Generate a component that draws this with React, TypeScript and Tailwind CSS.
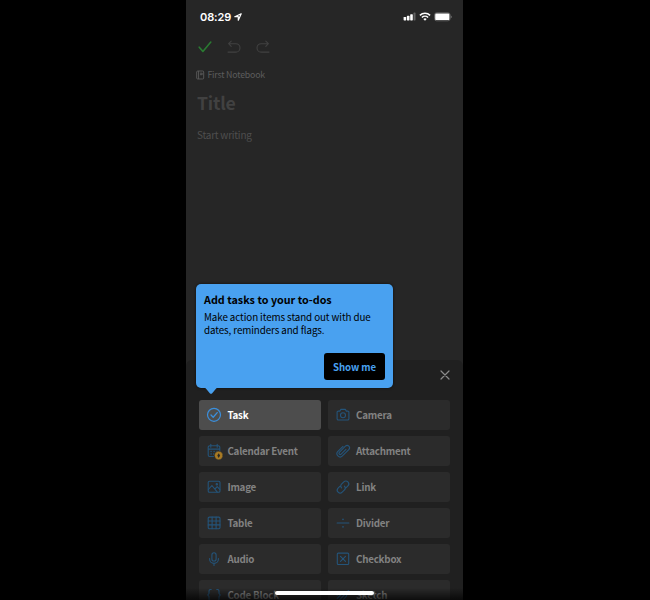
import type { ReactNode } from "react";

const FONT = "font-['Noto_Sans_CJK_SC','Noto_Sans',sans-serif]";

function Icon({ children, className = "" }: { children: ReactNode; className?: string }) {
  return (
    <svg
      viewBox="0 0 16 16"
      className={`h-4 w-4 shrink-0 overflow-visible ${className}`}
      fill="none"
      stroke="currentColor"
      strokeWidth="1.1"
      strokeLinecap="round"
      strokeLinejoin="round"
    >
      {children}
    </svg>
  );
}

const icons: Record<string, ReactNode> = {
  Task: (
    <>
      <circle cx="8" cy="7.8" r="6.5" strokeWidth="1.2" />
      <path d="M5 8 7.2 10.2 11.2 5.6" strokeWidth="1.3" />
    </>
  ),
  Camera: (
    <>
      <path d="M3.4 4.1h1.4l1.1-1.7h4.4l1.1 1.7h1.2a1.3 1.3 0 0 1 1.3 1.3v6.3a1.3 1.3 0 0 1-1.3 1.3H3.4a1.3 1.3 0 0 1-1.3-1.3V5.4a1.3 1.3 0 0 1 1.3-1.3Z" />
      <circle cx="8" cy="8.3" r="2.5" />
    </>
  ),
  "Calendar Event": (
    <>
      <path d="M7.5 13.5H3.7a1.5 1.5 0 0 1-1.5-1.5V4.3a1.5 1.5 0 0 1 1.5-1.5h8.6a1.5 1.5 0 0 1 1.5 1.5v3.5M4.8 1.3v3M11.2 1.3v3M2.4 6.1h11.2" />
      <path d="M5 8.5h.2M8 8.5h.2M11 8.5h.2M5 11h.2M7.6 11h.2" strokeWidth="1.3" />
      <circle cx="12.7" cy="12.5" r="4.2" fill="#a87a24" stroke="#2b2b2b" strokeWidth=".4" />
      <path d="M12.7 10.2 14.1 12.5l-1.4 2.4-1.4-2.4Z" fill="#2c2922" stroke="none" />
    </>
  ),
  Attachment: (
    <g transform="rotate(45 8 8)">
      <path d="M4.7 4.7v7.2a3.2 3.2 0 0 0 6.4 0V2.9a2.4 2.4 0 0 0-4.8 0v8.6a1.25 1.25 0 0 0 2.6 0V4.7" />
    </g>
  ),
  Image: (
    <>
      <rect x="2.2" y="2.3" width="11.8" height="11" rx="1.3" />
      <path d="m2.4 10.5 3.5-4 5.4 6.6M8.9 10l2.3-2.3 2.6 2.6" />
      <circle cx="10.8" cy="5.3" r=".7" />
    </>
  ),
  Link: (
    <path d="M6.6 8.9C5.4 7.7 5.5 6.1 6.5 5.1l2.3-2.3a2.85 2.85 0 0 1 4.1 4.1l-1.7 1.7M9.4 7.1c1.2 1.2 1.1 2.8.1 3.8l-2.3 2.3a2.85 2.85 0 0 1-4.1-4.1l1.7-1.7" />
  ),
  Table: (
    <>
      <rect x="2.2" y="2.1" width="11.8" height="11.6" rx="1.2" />
      <path d="M6.1 2.1v11.6M10.1 2.1v11.6M2.2 6h11.8M2.2 9.9h11.8" />
    </>
  ),
  Divider: (
    <>
      <path d="M2.1 8h11.8" />
      <path d="M8 4.2v.2M8 11.7v.2" strokeWidth="1.6" />
    </>
  ),
  Audio: (
    <>
      <rect x="5.9" y="1.8" width="4.2" height="8.2" rx="2.1" />
      <path d="M3.6 7.6v.4a4.4 4.4 0 0 0 8.8 0v-.4M8 12.5v2" />
    </>
  ),
  Checkbox: (
    <>
      <rect x="2.3" y="2.1" width="11.4" height="11.4" rx="1" />
      <path d="m5.5 5.3 5 5M10.5 5.3l-5 5" />
    </>
  ),
  "Code Block": (
    <path d="M5.2 2.5h-.7A1.5 1.5 0 0 0 3 4v2.5L1.7 8 3 9.5V12a1.5 1.5 0 0 0 1.5 1.5h.7M10.8 2.5h.7A1.5 1.5 0 0 1 13 4v2.5L14.3 8 13 9.5V12a1.5 1.5 0 0 1-1.5 1.5h-.7" />
  ),
  Sketch: <path d="m2.2 8.2 2-2M2.2 11.5 8 5.5M4.3 13.2l8.5-9M8.5 12.5l2.7-3.2 2.5-5.8" />,
};

const items = [
  "Task", "Camera", "Calendar Event", "Attachment", "Image", "Link",
  "Table", "Divider", "Audio", "Checkbox", "Code Block", "Sketch",
];

function Tile({ name }: { name: string }) {
  const active = name === "Task";
  return (
    <div
      className={`flex h-[29.5px] items-center gap-[5px] rounded-[3px] pl-[7.2px] ${
        active ? "bg-[#4d4d4d] text-white" : "bg-[#2b2b2b] text-[#828282]"
      }`}
    >
      <Icon className={active ? "text-[#3b8fdc]" : "text-[#24547a]"}>{icons[name]}</Icon>
      <span className="text-[9.8px] leading-4 font-bold tracking-[-0.22px] whitespace-nowrap">{name}</span>
    </div>
  );
}

function StatusBar() {
  return (
    <div className="flex h-8 items-center justify-between pt-px pr-[11px] pl-[14px] text-white">
      <div className="flex items-center gap-[2.5px]">
        <span className="font-['Inter',sans-serif] text-[11px] leading-4 font-semibold tracking-[-0.1px]">08:29</span>
        <svg viewBox="0 0 8 8" className="h-2 w-2" fill="none" stroke="currentColor" strokeWidth="1.2" strokeLinejoin="round">
          <path d="M7.2.8.8 3.7h3.5v3.5Z" />
        </svg>
      </div>
      <div className="flex items-center gap-[3px]">
        <svg viewBox="0 0 13 9" className="h-[9px] w-[13px]" fill="currentColor">
          <rect x=".6" y="5" width="2.6" height="3.4" rx=".6" />
          <rect x="3.9" y="3.8" width="2.6" height="4.6" rx=".6" />
          <rect x="7.2" y="2.2" width="2.6" height="6.2" rx=".6" />
          <rect x="10.5" y=".6" width="2" height="7.8" rx=".6" fill="#606060" />
        </svg>
        <svg viewBox="0 0 12 9" className="h-[9px] w-3" fill="none" stroke="currentColor" strokeWidth="1.5">
          <path d="M.9 3.4a7.3 7.3 0 0 1 10.2 0M2.9 5.5a4.4 4.4 0 0 1 6.2 0" />
          <path d="M6 8.7 4.3 7a2.4 2.4 0 0 1 3.4 0Z" fill="currentColor" stroke="none" />
        </svg>
        <svg viewBox="0 0 18 10" className="h-[10px] w-[18px]">
          <rect x=".5" y=".8" width="15.6" height="8" rx="2.2" fill="none" stroke="#707070" strokeWidth=".8" />
          <rect x="1.2" y="1.5" width="14.2" height="6.6" rx="1.2" fill="white" />
          <path d="M16.8 3.4v2.9q1-.4 1-1.45t-1-1.45" fill="#707070" />
        </svg>
      </div>
    </div>
  );
}

export default function App() {
  return (
    <div className={`flex h-[600px] w-[650px] justify-center overflow-hidden bg-black pr-px ${FONT}`}>
      <main className="relative flex h-[600px] w-[277px] flex-col overflow-hidden bg-[#262626]">
        <StatusBar />
        <div className="flex h-[30px] items-center gap-[13px] pl-[11px]">
          <Icon className="text-[#2a7a32]">
            <path d="m2.2 8.2 3.7 4.2L13.8 3" strokeWidth="1.6" />
          </Icon>
          <Icon className="text-[#414141]">
            <path d="M5.2 2.2 2.6 4.7l2.6 2.6M2.8 4.7h7a4.2 4.2 0 0 1 0 8.4H2" />
          </Icon>
          <Icon className="text-[#414141]">
            <path d="m10.8 2.2 2.6 2.5-2.6 2.6M13.2 4.7h-7a4.2 4.2 0 0 0 0 8.4H14" />
          </Icon>
        </div>
        <div className="flex h-[26px] items-center gap-[2.4px] pl-[10px] text-[#5c5c5c]">
          <svg viewBox="0 0 9 10" className="h-[10px] w-[9px]" fill="none" stroke="currentColor" strokeWidth=".9">
            <rect x=".7" y="1" width="7" height="8" rx="1" />
            <path d="M2.6 1v8M4 3.2h2.2v1.5H4" />
          </svg>
          <span className="text-[8.8px] leading-3 tracking-[-0.2px]">First Notebook</span>
        </div>
        <div className="flex h-[30px] items-center pb-px pl-[11px] text-[17.6px] leading-[29px] font-bold tracking-[-0.2px] text-[#414141]">Title</div>
        <div className="flex h-[34px] items-center pl-[11px] text-[10px] leading-4 tracking-[-0.23px] text-[#4e4e4e]">Start writing</div>

        <section className="mt-auto flex h-[240px] shrink-0 flex-col rounded-t-[6px] bg-[#202020]">
          <div className="flex h-[40px] shrink-0 items-center justify-end pr-[10px] pb-[10px] text-[#8b8b8b]">
            <Icon>
              <path d="m4 4 8 8M12 4l-8 8" strokeWidth="1.2" />
            </Icon>
          </div>
          <div className="grid grid-cols-2 gap-x-[6.5px] gap-y-[6.6px] px-[13.2px]">
            {items.map((name) => (
              <Tile key={name} name={name} />
            ))}
          </div>
        </section>

        <div className="absolute inset-x-0 bottom-0 h-3 bg-linear-to-b from-transparent to-black/70" />
        <div className="absolute bottom-[5px] left-[89px] h-[4px] w-[99px] rounded-full bg-white" />

        <aside className="absolute top-[284px] left-[10px] flex h-[104px] w-[197px] flex-col rounded-[5px] bg-[#49a1f0] px-2 pt-2 pb-2 text-black shadow-[0_0_3px_#000a]">
          <h2 className="text-[10.75px] leading-4 font-bold whitespace-nowrap">Add tasks to your to-dos</h2>
          <p className="mt-[2.5px] text-[9.8px] leading-[13px] tracking-[-0.09px] whitespace-nowrap text-black">
            Make action items stand out with due
            <br />
            dates, reminders and flags.
          </p>
          <button className="mt-auto h-[27px] w-[61px] self-end rounded-[3px] bg-black text-[9.6px] leading-4 font-bold tracking-[-0.05px] text-[#49a1f0]">
            Show me
          </button>
          <svg viewBox="0 0 16 8" className="absolute top-[103px] left-[7px] h-2 w-4" fill="#49a1f0">
            <path d="M0 0h16q-2.2.5-3.5 2.2L9.2 6.2q-1.2 1.3-2.4 0L3.5 2.2Q2.2.5 0 0" />
          </svg>
        </aside>
      </main>
    </div>
  );
}
